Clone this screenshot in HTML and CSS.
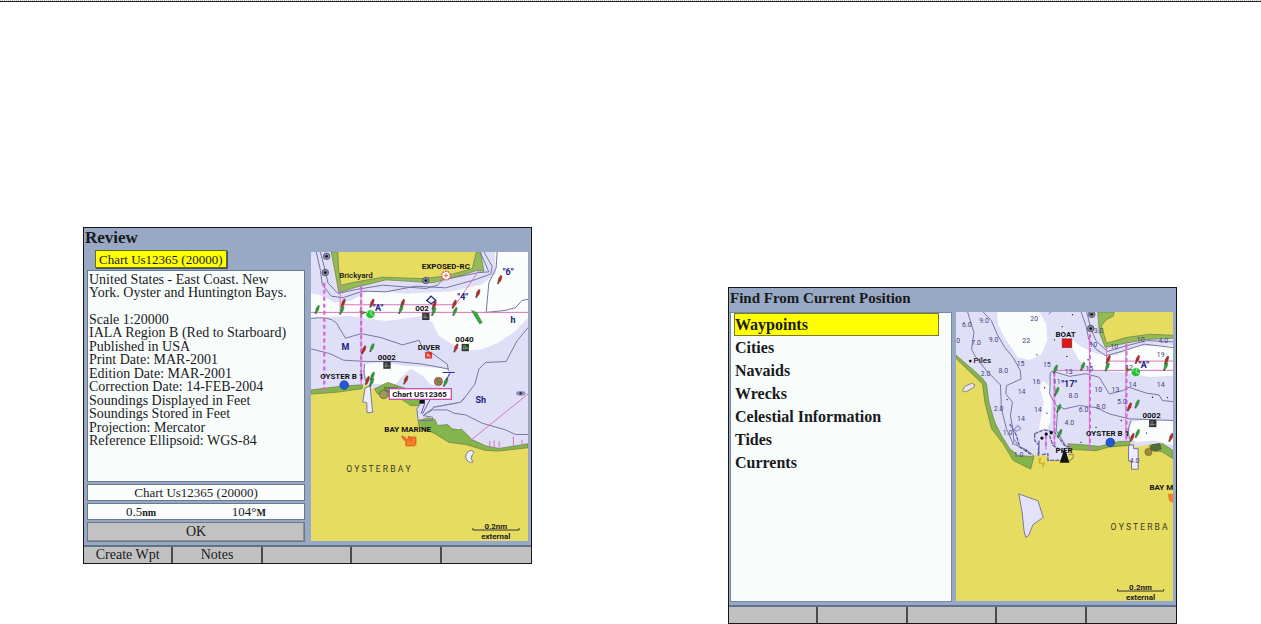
FILE: index.html
```html
<!DOCTYPE html>
<html lang="en">
<head>
<meta charset="utf-8">
<title>Chartplotter screens</title>
<link rel="stylesheet" href="styles.css">
</head>
<body>
<svg class="defs" aria-hidden="true">
  <defs>
    <g id="buoy-red"><path d="M-6 10L-4-2L3-12L7-9L4 3L-2 11Z" fill="#b02b25" stroke="#66302c" stroke-width="1"/><circle cx="-5" cy="12" r="3" fill="#554"/></g>
    <g id="buoy-green"><path d="M-6 10L-4-2L3-12L7-9L4 3L-2 11Z" fill="#2f9a3a" stroke="#2d6433" stroke-width="1"/><circle cx="-5" cy="12" r="3" fill="#554"/></g>
    <g id="beacon"><circle r="10" fill="#888aa5" stroke="#3a3a55" stroke-width="2"/><circle r="4" fill="#111"/></g>
    <g id="mark"><rect x="-11" y="-11" width="22" height="22" fill="#333"/><path d="M-5-7V7M0-7V7M-8 3H8" stroke="#999" stroke-width="2"/></g>
    <g id="light"><circle r="13" fill="#23c22e"/><path d="M-10-2A12 12 0 0 1 4-13L0 0L10 5" fill="none" stroke="#eaffea" stroke-width="2"/></g>
  </defs>
</svg>
<hr class="rule">
<main class="page">
  <section class="screen">
    <h1 class="title">Review</h1>
    <div class="body">
      <div class="side">
        <button class="tab" type="button">Chart Us12365 (20000)</button>
        <div class="panel">
          <p class="intro">United States - East Coast. New York. Oyster and Huntington Bays.</p>
          <ul class="facts">
            <li>Scale 1:20000</li><li>IALA Region B (Red to Starboard)</li><li>Published in USA</li><li>Print Date: MAR-2001</li><li>Edition Date: MAR-2001</li><li>Correction Date: 14-FEB-2004</li><li>Soundings Displayed in Feet</li><li>Soundings Stored in Feet</li><li>Projection: Mercator</li><li>Reference Ellipsoid: WGS-84</li>
          </ul>
        </div>
        <p class="field">Chart Us12365 (20000)</p>
        <p class="field split"><span>0.5<small>nm</small></span><span>104°<small>M</small></span></p>
        <button class="ok" type="button">OK</button>
      </div>
      <svg class="map" viewBox="14 12 654 870" preserveAspectRatio="xMidYMid slice" role="img" aria-label="Chart of Oyster Bay">
        <rect x="14" y="12" width="654" height="870" fill="#e0dff8"/>
        <path d="M14 136Q50 140 85 165L135 158L190 128L300 138L440 130L530 110L572 75L568 12H668V210L630 250L580 285L530 305L480 310L440 290L400 265L380 225L350 205L300 212L240 220L130 205L14 210Z" fill="#fafdfb"/>
        <path d="M176 350L225 345L300 355L380 360L425 362L430 385L410 410L375 412L350 385L315 365L290 385L270 410L200 410L178 390Z" fill="#fafdfb"/>
        <path d="M75 12H512L500 60L470 85L380 90L240 98L150 118L95 128Z" fill="#e6dd60"/>
        <path d="M75 12H95L97 60L104 112L150 102L230 88L350 92L420 84L500 62L512 12H525L535 70L512 68L470 82L380 105L240 96L150 118L98 135L90 90Z" fill="#91bb55" stroke="#6d7551" stroke-width="2"/>
        <path d="M30 12L42 65L48 110L75 145L110 150L170 130L240 132L330 115L420 120L510 95L556 78L560 55L535 12M42 12L58 72L65 105L95 137L150 125L230 112L360 122L395 112L410 96L520 74L550 72L524 12" fill="none" stroke="#7473a0" stroke-width="3"/>
        <path d="M575 12L572 60L550 105L542 194L600 188L630 180L650 158L668 155M14 212Q70 205 90 225L118 272L165 258L225 270L290 292L340 278L350 302L380 318L425 350L428 370M14 304L70 318L112 338L180 342L270 342L350 350L430 365M176 350Q168 385 185 410M668 240L635 280L602 342L540 345L520 365L508 410L478 450L465 465L380 480" fill="none" stroke="#77769e" stroke-width="3"/>
        <path d="M14 428L70 422L120 424L175 414L184 410L200 425L250 410L300 430L350 445L350 468L333 485L336 522L375 540L440 580L500 592L560 608L668 598V882H14Z" fill="#e6dd60"/>
        <path d="M14 428L60 422L110 416L170 412L168 424L90 435L14 440ZM205 425L245 405L320 430L355 445L340 475L315 475L285 455L215 440Z" fill="#84b54c" stroke="#6e7549" stroke-width="2"/>
        <path d="M177 422L192 415L200 495L183 497L182 466L170 464Z" fill="#eeecff" stroke="#77769e" stroke-width="3"/>
        <path d="M333 485L355 446L380 480L465 465L520 440L668 440V596L560 606L510 580L470 550L392 530L365 515L337 520Z" fill="#e0dff8"/>
        <path d="M337 520L365 512L388 517L395 535L425 532L440 545L458 548L468 546L500 578L540 596L580 604L668 590V602L580 612L540 610L480 592L430 586L385 558L340 540Z" fill="#84b54c" stroke="#6e7549" stroke-width="2"/>
        <path d="M478 450L465 465L385 480L352 505L380 488L425 488L445 498L480 503L530 528L600 548L630 562H668M355 450L333 485L337 520H380V510L352 505" fill="none" stroke="#77769e" stroke-width="3"/>
        <path d="M480 630Q482 612 498 610Q510 615 500 623Q492 635 502 645Q486 650 480 630Z" fill="#f1effb" stroke="#77769e" stroke-width="3"/>
        <path d="M14 194H668M105 171H450M102 105V190M165 105V410M450 171L525 60M668 440L495 580M553 582V600M566 580V602M581 582V602M624 568V598M650 578V600M55 422V434" fill="none" stroke="#d874ba" stroke-width="3"/>
        <path d="M54 105V430M165 115V410" fill="none" stroke="#d46bdc" stroke-width="7" stroke-dasharray="12 9"/>
        <use href="#beacon" x="61" y="25"/><use href="#beacon" x="57" y="74"/><use href="#beacon" x="360" y="98"/>
        <use href="#buoy-red" x="111" y="165"/><use href="#buoy-red" x="198" y="165"/><use href="#buoy-red" x="290" y="166"/><use href="#buoy-red" x="385" y="172"/><use href="#buoy-red" x="446" y="168"/><use href="#buoy-red" x="517" y="136"/><use href="#buoy-red" x="583" y="94"/><use href="#buoy-red" x="173" y="306"/><use href="#buoy-red" x="451" y="300"/><use href="#buoy-red" x="300" y="396"/><use href="#buoy-red" x="184" y="398"/>
        <use href="#buoy-green" x="33" y="184"/><use href="#buoy-green" x="107" y="186"/><use href="#buoy-green" x="285" y="184"/><use href="#buoy-green" x="384" y="190"/><use href="#buoy-green" x="448" y="190"/><use href="#buoy-green" x="198" y="299"/><use href="#buoy-green" x="199" y="385"/><use href="#buoy-green" x="197" y="403"/><use href="#buoy-green" x="420" y="403"/>
        <use href="#light" x="193" y="199"/>
        <path d="M161 190L180 194L166 200Z" fill="#8b703a" stroke="#655" stroke-width="2"/>
        <path d="M498 188L514 195L520 207L530 225L522 228L508 206Z" fill="#23b634" stroke="#526b37" stroke-width="2"/>
        <path d="M376 145L390 158L376 168L363 158Z" fill="#f5f5ff" stroke="#262675" stroke-width="4"/>
        <circle cx="421" cy="83" r="13" fill="#fff" stroke="#df655d" stroke-width="4" stroke-dasharray="6 2"/><path d="M415 83H427M421 77V89" stroke="#df655d" stroke-width="3"/>
        <use href="#mark" x="360" y="206"/><use href="#mark" x="243" y="353"/><use href="#mark" x="479" y="300"/>
        <path d="M474 295L490 304" stroke="#35a346" stroke-width="5"/>
        <rect x="358" y="313" width="21" height="20" fill="#d83428"/><path d="M363 318L374 328M363 327L368 323" stroke="#fff" stroke-width="3"/>
        <circle cx="114" cy="413" r="13" fill="#2457db" stroke="#183381" stroke-width="2"/>
        <circle cx="398" cy="402" r="12" fill="#938154" stroke="#a54838" stroke-width="3"/><path d="M392 397L405 407" stroke="#359439" stroke-width="4"/>
        <path d="M410 375H447M432 378L422 398" stroke="#28289a" stroke-width="3"/>
        <circle cx="233" cy="441" r="13" fill="#9b9a52" stroke="#555" stroke-width="2"/><path d="M235 420L278 421L270 438L239 432Z" fill="#71904c" stroke="#566148" stroke-width="2"/>
        <ellipse cx="646" cy="438" rx="14" ry="7" fill="#8b92b4"/><circle cx="646" cy="438" r="4" fill="#333851"/>
        <rect x="341" y="454" width="16" height="15" fill="#111"/><path d="M357 468L346 499M372 458L350 500" stroke="#656596" stroke-width="3"/>
        <rect x="250" y="424" width="187" height="32" fill="#fff" stroke="#c951ad" stroke-width="4"/>
        <path d="M288 566L299 572V578H307V568H313V580H317V570H330V592L326 596H300V582L290 574Z" fill="#f38121" stroke="#e34f28" stroke-width="3"/>
        <g class="poi"><text x="348" y="62">EXPOSED-RC</text><text class="place" x="99" y="90">Brickyard</text><text x="328" y="190">002</text><text x="336" y="307">DIVER</text><text x="449" y="284">0040</text><text x="215" y="338">0002</text><text x="42" y="396">OYSTER B 1</text><text x="259" y="448">Chart US12365</text><text x="235" y="556">BAY MARINE</text></g>
        <g class="nav"><text x="200" y="190">"A"</text><text x="455" y="158">"4"</text><text x="592" y="82">"6"</text><text x="106" y="306">M</text><text x="615" y="225">h</text><text x="510" y="466">Sh</text></g>
        <text class="area" x="120" y="675">O Y S T E R B A Y</text>
        <g class="scale"><path d="M502 844V850H641V844" fill="none" stroke="#333" stroke-width="3"/><text x="571" y="846">0.2nm</text><text x="571" y="876">external</text></g>
      </svg>
    </div>
    <div class="keys"><button type="button">Create Wpt</button><button type="button">Notes</button><button type="button" aria-label="Soft key 3"></button><button type="button" aria-label="Soft key 4"></button><button type="button" aria-label="Soft key 5"></button></div>
  </section>

  <section class="screen lower">
    <h2 class="title find">Find From Current Position</h2>
    <div class="body">
      <ul class="menu">
        <li><button class="on" type="button">Waypoints</button></li><li><button type="button">Cities</button></li><li><button type="button">Navaids</button></li><li><button type="button">Wrecks</button></li><li><button type="button">Celestial Information</button></li><li><button type="button">Tides</button></li><li><button type="button">Currents</button></li>
      </ul>
      <svg class="map" viewBox="18 18 654 870" preserveAspectRatio="xMidYMid slice" role="img" aria-label="Chart around current position">
        <rect x="18" y="18" width="654" height="870" fill="#e0dff8"/>
        <path d="M142 18H270L290 55L293 105L275 145L240 163L205 155L185 125L162 90L145 55ZM345 85L400 125L445 145L500 150L560 122L672 118V210L600 214L530 200L440 195L390 165ZM280 225L300 240L305 290L302 350L290 375L268 372L275 330L282 290L270 245ZM545 350L590 342L672 345V420L620 405L560 410L540 390Z" fill="#fafdfb"/>
        <path d="M448 18H672V90L590 95L530 105L470 120L458 75Z" fill="#e6dd60"/>
        <path d="M445 18H495L492 30L470 42L456 60L472 112L530 95L600 85L672 88V97L590 101L530 112L468 125L450 80Z" fill="#91bb55" stroke="#6d7551" stroke-width="2"/>
        <path d="M18 148L70 195L98 225L107 260L120 330L155 395L180 430L205 455L250 450L290 450L300 465L350 460L366 425L430 435L485 425L540 408L560 425L620 415L672 435V888H18Z" fill="#e6dd60"/>
        <path d="M18 148L65 188L98 218L110 235L117 290L135 350L155 390L180 430L205 450L253 454L243 492L190 465L160 415L125 370L105 290L98 235L18 158ZM355 415L400 418L450 423L510 408L540 408L542 420L480 425L440 436L360 432ZM600 420L640 415L672 435V460L640 440L605 435Z" fill="#84b54c" stroke="#6e7549" stroke-width="2"/>
        <path d="M53 18L72 80L65 130L75 150L110 195L152 238L155 310L170 370L190 415L230 433L253 452M100 18L125 45L142 85L165 125L190 155L212 195L214 220L170 240L168 265L188 290L182 330L190 375L192 410M395 18L410 60L418 100L440 130L470 150L520 136L585 115L672 125M412 18L425 70L440 105L475 137L530 120L595 104L672 108M297 25L304 18M314 198L360 212L410 204L450 215L480 265L520 255L540 245L590 262L630 268L640 285L672 288M312 198Q298 190 302 230L300 265L320 300L345 310L390 300L440 306L480 325L540 340L672 345M324 315L320 375L345 415L355 430M545 345Q530 380 545 410" fill="none" stroke="#77769e" stroke-width="3"/>
        <path d="M180 355L200 390L210 425L245 448M255 385L283 373L315 380L330 400L345 420L360 425M255 385V405L268 420L265 450M268 405V452M300 390L310 420L335 435L350 445V465H295V445L276 448" fill="none" stroke="#6361a0" stroke-width="4" stroke-dasharray="12 3"/>
        <path d="M538 420L553 418V430H567V492H547V467H538Z" fill="#eeecff" stroke="#77769e" stroke-width="3"/>
        <path d="M37 255L45 242L65 233L75 237L72 245L48 259Z" fill="#e7e5ed" stroke="#888478" stroke-width="3"/>
        <path d="M207 566L265 587L281 637L250 659L236 693L228 697L223 677L217 620Z" fill="#e4e2f8" stroke="#7d7894" stroke-width="3"/>
        <path d="M312 194H672M475 166H672M314 195V415M420 85V435M472 120V190M530 105V410M289 380V432M366 432V416" fill="none" stroke="#d874ba" stroke-width="3"/>
        <path d="M422 85V435M532 115V410M315 200V420M289 388V432" fill="none" stroke="#d46bdc" stroke-width="6" stroke-dasharray="12 9"/>
        <use href="#beacon" x="427" y="25"/><use href="#beacon" x="424" y="68"/>
        <use href="#buoy-red" x="477" y="160"/><use href="#buoy-red" x="565" y="160"/><use href="#buoy-red" x="653" y="162"/><use href="#buoy-red" x="541" y="303"/><use href="#buoy-red" x="549" y="395"/><use href="#buoy-red" x="666" y="395"/>
        <use href="#buoy-green" x="318" y="189"/><use href="#buoy-green" x="400" y="181"/><use href="#buoy-green" x="474" y="182"/><use href="#buoy-green" x="650" y="181"/><use href="#buoy-green" x="322" y="256"/><use href="#buoy-green" x="328" y="307"/><use href="#buoy-green" x="331" y="383"/><use href="#buoy-green" x="564" y="294"/><use href="#buoy-green" x="565" y="383"/>
        <use href="#light" x="560" y="199"/><path d="M529 185L545 191L532 200Z" fill="#8b703a"/>
        <rect x="338" y="99" width="29" height="26" fill="#dd1717" stroke="#962129" stroke-width="2"/>
        <use href="#mark" x="611" y="354"/><circle cx="483" cy="411" r="13" fill="#2457db" stroke="#183381" stroke-width="2"/>
        <path d="M345 428L360 472H331Z" fill="#111"/><path d="M358 448Q378 444 370 458L360 467" fill="none" stroke="#a49454" stroke-width="4"/>
        <path d="M205 360L213 370L199 378L194 370ZM193 402L204 416L189 417Z" fill="none" stroke="#9b9dcc" stroke-width="4"/>
        <path d="M266 462L273 460L268 472L276 474M276 477L283 473L280 487" fill="none" stroke="#cfab29" stroke-width="4"/>
        <circle cx="598" cy="440" r="11" fill="#a38a33" stroke="#6f6f40" stroke-width="2"/><path d="M608 418L632 414L636 431L617 438L604 430Z" fill="#526e38" stroke="#454d2b" stroke-width="2"/>
        <path d="M656 566H672V594L660 587Z" fill="#f38121"/>
        <g fill="#111"><circle cx="61" cy="166" r="4"/><circle cx="290" cy="386" r="5"/><circle cx="305" cy="382" r="5"/><circle cx="277" cy="398" r="5"/><circle cx="262" cy="147" r="2"/><circle cx="369" cy="26" r="2"/><circle cx="315" cy="102" r="2"/><circle cx="338" cy="62" r="2"/><circle cx="352" cy="152" r="2"/><circle cx="172" cy="282" r="2"/><circle cx="285" cy="246" r="2"/><circle cx="292" cy="323" r="2"/><circle cx="230" cy="436" r="2"/><circle cx="395" cy="411" r="2"/><circle cx="440" cy="366" r="2"/><circle cx="516" cy="345" r="2"/><circle cx="592" cy="383" r="2"/><circle cx="610" cy="275" r="2"/><circle cx="655" cy="276" r="2"/><circle cx="416" cy="162" r="2"/></g>
        <g class="depth"><text x="36" y="64">6.0</text><text x="88" y="50">9.0</text><text x="242" y="45">20</text><text x="218" y="110">22</text><text x="19" y="110">0</text><text x="64" y="118">7.0</text><text x="117" y="108">9.0</text><text x="146" y="202">8.0</text><text x="201" y="180">15</text><text x="280" y="185">15</text><text x="93" y="212">2.0</text><text x="248" y="235">16</text><text x="204" y="264">14</text><text x="132" y="316">2.0</text><text x="253" y="320">14</text><text x="202" y="346">14</text><text x="159" y="388">1.0</text><text x="192" y="454">1.0</text><text x="346" y="205">13</text><text x="408" y="196">15</text><text x="310" y="234">11</text><text x="435" y="258">10</text><text x="487" y="258">13</text><text x="538" y="244">14</text><text x="623" y="243">14</text><text x="357" y="278">8.0</text><text x="440" y="311">8.0</text><text x="388" y="320">6.0</text><text x="503" y="295">5.0</text><text x="345" y="358">4.0</text><text x="623" y="155">19</text><text x="563" y="108">10</text><text x="628" y="112">4.0</text><text x="420" y="125">10</text><text x="483" y="130">10</text><text x="528" y="192">12</text><text x="433" y="82">3.0</text><text x="542" y="474">4.0</text></g>
        <g class="poi"><text class="place" x="71" y="171">Piles</text><text x="318" y="93">BOAT</text><text x="318" y="443">PIER</text><text x="410" y="393">OYSTER B 1</text><text x="580" y="338">0002</text><text x="601" y="555">BAY M</text></g>
        <g class="nav"><text x="335" y="244">"17"</text><text x="568" y="188">"A"</text></g>
        <text class="area" x="484" y="675">O Y S T E R B A</text>
        <g class="scale"><path d="M505 853V859H644V853" fill="none" stroke="#333" stroke-width="3"/><text x="574" y="855">0.2nm</text><text x="574" y="886">external</text></g>
      </svg>
    </div>
    <div class="keys"><button type="button" aria-label="Soft key 1"></button><button type="button" aria-label="Soft key 2"></button><button type="button" aria-label="Soft key 3"></button><button type="button" aria-label="Soft key 4"></button><button type="button" aria-label="Soft key 5"></button></div>
  </section>
</main>
</body>
</html>
```
FILE: styles.css
```css
* { box-sizing: border-box; }
body { margin: 0; background: #fff; color: #191a1c; font-family: "Liberation Serif", serif; }
h1, h2, p, ul { margin: 0; padding: 0; }
ul { list-style: none; }
button { font: inherit; color: inherit; border: 0; padding: 0; border-radius: 0; background: none; }
.defs { position: absolute; width: 0; height: 0; }
.rule { margin: 0; border: 0; border-top: 1px dotted #bbb; border-bottom: 1px solid #222; height: 2px; }
.page { display: grid; grid-template-columns: 1fr 1fr; gap: 196px; align-items: start; padding: 225px 84px 0 83px; }
.screen { border: 1px solid #171717; background: #97a9c4; }
.lower { margin-top: 60px; }
.title { height: 24px; padding-left: 1px; font-size: 17px; line-height: 20px; font-weight: 700; }
.find { font-size: 15px; }
.body { display: grid; grid-template-columns: 227fr 220fr; }
.map { display: block; width: 217px; max-width: 100%; height: auto; margin-bottom: 4px; }
.side { display: flex; flex-direction: column; padding: 0 6px 3px 3px; gap: 2px; font-size: 14px; line-height: 13px; }
.tab { align-self: flex-start; margin: -2px 0 0 8px; height: 18px; padding: 0 3px; font-size: 13px; background: #ffff08; border: 1px solid #65682c; box-shadow: 1px 1px 0 #48505f; white-space: nowrap; }
.panel { flex: 1; background: #f8fcfb; border: 1px solid #69778f; padding: 2px 1px; }
.intro { min-height: 40px; padding-right: 12px; }
.facts { display: grid; min-height: 134px; align-content: space-between; }
.facts li { white-space: nowrap; }
.field { height: 17px; background: #fbfdfc; border: 1px solid #69778f; text-align: center; font-size: 13px; line-height: 15px; }
.split { display: flex; justify-content: space-between; padding: 0 38px; }
small { font-size: 10px; font-weight: 700; }
.ok { height: 20px; background: #c2c2c2; border: 1px solid #69778f; box-shadow: inset -1px -1px 0 #929292; font-size: 14px; }
.keys { display: grid; grid-template-columns: repeat(5, 1fr); border-top: 2px solid #62718b; }
.keys button { height: 16px; background: #c1c1c1; border-right: 2px solid #4b4c50; font-size: 14px; line-height: 14px; }
.keys button:last-child { border-right: 0; }
.menu { margin: 0 4px 3px 1px; padding: 0 3px; background: #f8fcfb; border: 1px solid #7887a2; font-size: 16px; font-weight: 700; }
.menu li { height: 23px; padding-right: 9px; }
.menu button { width: 100%; height: 23px; text-align: left; line-height: 20px; border: 1px solid transparent; }
.menu .on { background: #ffff00; border-color: #77792d; }
.poi, .nav, .depth, .scale, .area { font-family: Roboto, "Liberation Sans", sans-serif; }
.poi { font-size: 24px; font-weight: 700; fill: #111; }
.place { font-weight: 500; }
.nav { font-size: 27px; font-weight: 700; fill: #202083; }
.depth { font-size: 21px; fill: #44447c; }
.area { font-size: 26px; fill: #3a3922; }
.scale { font-size: 24px; font-weight: 700; text-anchor: middle; fill: #222; }
```
